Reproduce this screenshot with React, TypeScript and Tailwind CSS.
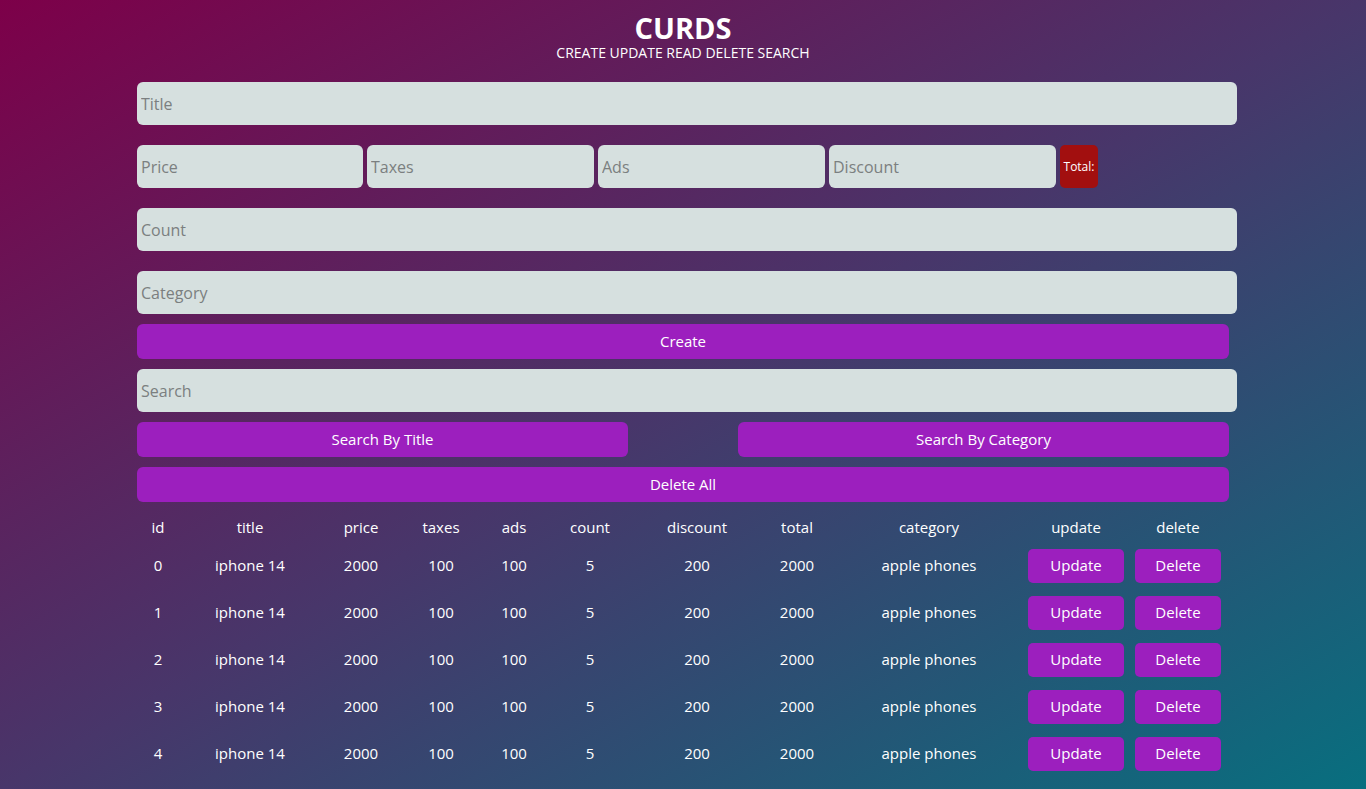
const rows = [0, 1, 2, 3, 4].map((id) => ({
  id,
  title: 'iphone 14',
  price: 2000,
  taxes: 100,
  ads: 100,
  count: 5,
  discount: 200,
  total: 2000,
  category: 'apple phones',
}));

const headers = [
  { label: 'id', w: 'w-[42px]' },
  { label: 'title', w: 'w-[142px]' },
  { label: 'price', w: 'w-[80px]' },
  { label: 'taxes', w: 'w-[80px]' },
  { label: 'ads', w: 'w-[66px]' },
  { label: 'count', w: 'w-[86px]' },
  { label: 'discount', w: 'w-[128px]' },
  { label: 'total', w: 'w-[72px]' },
  { label: 'category', w: 'w-[192px]' },
  { label: 'update', w: 'w-[102px]' },
  { label: 'delete', w: 'w-[102px]' },
];

const inputCls =
  'h-[43px] rounded-[6px] bg-[#d6e0df] px-[4px] text-[16px] text-[#333] placeholder:text-[#7b7f80] outline-none';

const btnCls =
  'h-[35px] rounded-[6px] bg-[#9c1fbe] text-[15px] text-white';

export default function App() {
  return (
    <div
      className="min-h-[789px] w-full bg-[linear-gradient(to_bottom_right,#7d0049,#48366a_50%,#086f7f)] text-white"
      style={{ fontFamily: '"Segoe UI", "Open Sans", "Noto Sans", sans-serif' }}
    >
      {/* Header */}
      <div className="pt-[11px] text-center">
        <h1 className="text-[29px] font-bold leading-[34px]">CURDS</h1>
        <p className="text-[14px] leading-[16px]">CREATE UPDATE READ DELETE SEARCH</p>
      </div>

      <div className="mx-auto mt-[21px] w-[1092px]">
        {/* Inputs */}
        <input className={`${inputCls} block w-[1100px]`} placeholder="Title" />
        <div className="mt-[20px] flex items-center gap-[4px]">
          <input className={`${inputCls} w-[226px]`} placeholder="Price" />
          <input className={`${inputCls} w-[227px]`} placeholder="Taxes" />
          <input className={`${inputCls} w-[227px]`} placeholder="Ads" />
          <input className={`${inputCls} w-[227px]`} placeholder="Discount" />
          <span className="flex h-[43px] w-[38px] items-center justify-center rounded-[5px] bg-[#a20f0f] text-[12px]">
            Total:
          </span>
        </div>
        <input className={`${inputCls} mt-[20px] block w-[1100px]`} placeholder="Count" />
        <input className={`${inputCls} mt-[20px] block w-[1100px]`} placeholder="Category" />
        <button className={`${btnCls} mt-[10px] block w-full`}>Create</button>

        {/* Search */}
        <input className={`${inputCls} mt-[10px] block w-[1100px]`} placeholder="Search" />
        <div className="mt-[10px] flex justify-between">
          <button className={`${btnCls} w-[491px]`}>Search By Title</button>
          <button className={`${btnCls} w-[491px]`}>Search By Category</button>
        </div>
        <button className={`${btnCls} mt-[10px] block w-full`}>Delete All</button>

        {/* Table */}
        <table className="mt-[10px] w-full table-fixed text-center text-[15px]">
          <thead>
            <tr className="h-[30px]">
              {headers.map((h) => (
                <th key={h.label} className={`${h.w} font-normal`}>
                  {h.label}
                </th>
              ))}
            </tr>
          </thead>
          <tbody>
            {rows.map((r) => (
              <tr key={r.id} className="h-[47px]">
                <td>{r.id}</td>
                <td>{r.title}</td>
                <td>{r.price}</td>
                <td>{r.taxes}</td>
                <td>{r.ads}</td>
                <td>{r.count}</td>
                <td>{r.discount}</td>
                <td>{r.total}</td>
                <td>{r.category}</td>
                <td>
                  <button className="h-[34px] w-[96px] rounded-[5px] bg-[#9c1fbe] text-[15px]">Update</button>
                </td>
                <td>
                  <button className="h-[34px] w-[86px] rounded-[5px] bg-[#9c1fbe] text-[15px]">Delete</button>
                </td>
              </tr>
            ))}
          </tbody>
        </table>
      </div>
    </div>
  );
}
